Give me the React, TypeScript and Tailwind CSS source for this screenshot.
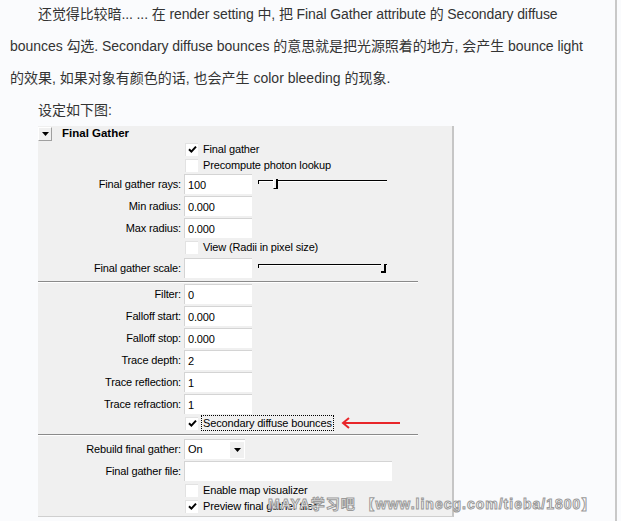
import type { ReactNode } from "react";

const body = "font-['Liberation_Sans','Noto_Sans_CJK_SC',sans-serif]";
const ui = "font-['Liberation_Sans',Arial,sans-serif]";

function Check({ checked }: { checked?: boolean }) {
  return (
    <span className="flex h-[13px] w-[13px] shrink-0 items-center justify-center border-t border-l border-[#e2e2e2] bg-white">
      {checked && (
        <svg width="9" height="9" viewBox="0 0 9 9">
          <path d="M1 4.2 L3.4 6.6 L8 1.6" fill="none" stroke="#000" strokeWidth="2" />
        </svg>
      )}
    </span>
  );
}

function CheckRow({ label, checked, focused, children }: { label: string; checked?: boolean; focused?: boolean; children?: ReactNode }) {
  return (
    <div className="flex h-[16px] items-center pl-[147px]">
      <Check checked={checked} />
      <span
        className={`ml-[3px] leading-[14px] ${focused ? "border border-dotted border-black px-[1px]" : "px-[2px]"}`}
      >
        {label}
      </span>
      {children}
    </div>
  );
}

function Field({ label, value, wide, children }: { label: string; value?: string; wide?: boolean; children?: ReactNode }) {
  return (
    <div className="flex h-[22px] items-center">
      <span className="w-[143px] text-right">{label}</span>
      <span
        className={`ml-[3px] h-[20px] border-t border-l border-[#d4d4d4] bg-white pl-[3px] leading-[20px] ${wide ? "w-[208px]" : "w-[68px]"}`}
      >
        {value}
      </span>
      {children}
    </div>
  );
}

function Slider({ end }: { end?: boolean }) {
  return (
    <div className="relative ml-[6px] h-[12px] w-[129px]">
      <div className="absolute left-0 right-0 top-[2px] h-[1px] bg-black" />
      <div className="absolute left-0 right-0 top-[3px] h-[1px] bg-white" />
      <div className="absolute left-0 top-[2px] h-[4px] w-[1px] bg-black" />
      {end ? (
        <div className="absolute right-[1px] top-[2px] h-[9px] w-[5px] border-r-2 border-b-2 border-black bg-[#f0f0f0]" />
      ) : (
        <div className="absolute left-[15px] top-[1px] h-[10px] w-[5px] border-l border-r-2 border-b border-l-white border-r-black border-b-black bg-[#f0f0f0]" />
      )}
    </div>
  );
}

function Divider() {
  return (
    <div className="w-[380px]">
      <div className="h-[1px] bg-[#8a8a8a]" />
      <div className="h-[1px] bg-white" />
    </div>
  );
}

export default function App() {
  return (
    <div className="relative flex h-[521px] w-[621px] overflow-hidden bg-[#fafbfd]">
      <div className="w-[615px]">
        <div className={`-mt-[2px] text-[14px] leading-[32px] text-[#333] ${body}`}>
          <div className="whitespace-nowrap pl-[38px] tracking-[-0.1px]">
            还觉得比较暗... ... 在 render setting 中, 把 Final Gather attribute 的 Secondary diffuse
          </div>
          <div className="whitespace-nowrap pl-[10px] tracking-[-0.05px]">
            bounces 勾选. Secondary diffuse bounces 的意思就是把光源照着的地方, 会产生 bounce light
          </div>
          <div className="whitespace-nowrap pl-[10px]">的效果, 如果对象有颜色的话, 也会产生 color bleeding 的现象.</div>
          <div className="whitespace-nowrap pl-[38px]">设定如下图:</div>
        </div>

        <div
          className={`ml-[38px] h-[391px] w-[416px] border-r-2 border-b border-r-[#c6c6c6] border-b-[#cfcfcf] bg-[#f0f0f0] text-[11px] tracking-[-0.15px] text-black ${ui}`}
        >
          <div className="flex h-[15px] items-center">
            <span className="flex h-[14px] w-[14px] items-center justify-center border-t border-l border-r border-b border-t-white border-l-white border-r-[#a0a0a0] border-b-[#a0a0a0]">
              <svg width="7" height="4" viewBox="0 0 7 4">
                <path d="M0 0 H7 L3.5 4 Z" fill="#000" />
              </svg>
            </span>
            <span className="ml-[10px] text-[11.5px] font-bold tracking-normal">Final Gather</span>
          </div>
          <CheckRow label="Final gather" checked />
          <CheckRow label="Precompute photon lookup" />
          <Field label="Final gather rays:" value="100">
            <Slider />
          </Field>
          <Field label="Min radius:" value="0.000" />
          <Field label="Max radius:" value="0.000" />
          <CheckRow label="View (Radii in pixel size)" />
          <div className="mt-[2px]">
            <Field label="Final gather scale:" value="">
              <Slider end />
            </Field>
          </div>
          <div className="mt-[2px]">
            <Divider />
          </div>
          <Field label="Filter:" value="0" />
          <Field label="Falloff start:" value="0.000" />
          <Field label="Falloff stop:" value="0.000" />
          <Field label="Trace depth:" value="2" />
          <Field label="Trace reflection:" value="1" />
          <Field label="Trace refraction:" value="1" />
          <CheckRow label="Secondary diffuse bounces" checked focused>
            <svg className="ml-[7px]" width="60" height="12" viewBox="0 0 60 12">
              <path d="M2 6 H59" stroke="#e8262a" strokeWidth="2" fill="none" />
              <path d="M8 1 L2 6 L8 11" stroke="#e8262a" strokeWidth="2" fill="none" />
            </svg>
          </CheckRow>
          <div className="mt-[3px]">
            <Divider />
          </div>
          <div className="mt-[2px] flex h-[22px] items-center">
            <span className="w-[143px] text-right">Rebuild final gather:</span>
            <span className="ml-[3px] flex h-[20px] w-[61px] items-center border-t border-l border-[#d4d4d4] bg-white pl-[3px]">
              <span className="flex-1">On</span>
              <span className="mr-[1px] flex h-[16px] w-[14px] items-center justify-center bg-[#f0f0f0]">
                <svg width="7" height="4" viewBox="0 0 7 4">
                  <path d="M0 0 H7 L3.5 4 Z" fill="#000" />
                </svg>
              </span>
            </span>
          </div>
          <Field label="Final gather file:" value="" wide />
          <CheckRow label="Enable map visualizer" />
          <CheckRow label="Preview final gather tiles" checked />
        </div>
      </div>
      <div className="w-[2px] bg-[#c8c8c8]" />

      <div
        className={`absolute left-[268px] top-[495px] whitespace-nowrap text-[14px] font-bold leading-[18px] tracking-[1px] text-white [-webkit-text-stroke:1px_#9a9a9a] ${body}`}
      >
        MAYA学习吧 【www.linecg.com/tieba/1800】
      </div>
    </div>
  );
}
